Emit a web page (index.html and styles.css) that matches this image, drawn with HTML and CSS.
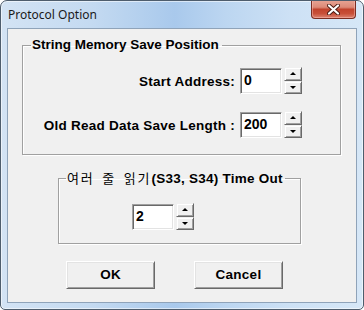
FILE: index.html
```html
<!DOCTYPE html>
<html lang="ko">
<head>
<meta charset="utf-8">
<title>Protocol Option</title>
<link rel="stylesheet" href="styles.css">
</head>
<body>
<div class="window">
  <div class="titlebar">
    <span class="title">Protocol Option</span>
    <span class="close">
      <svg width="13" height="11" viewBox="0 0 13 11">
        <path d="M2 1.5 L11 9.5 M11 1.5 L2 9.5" stroke="#4a1a12" stroke-width="4" stroke-linecap="round"/>
        <path d="M2 1.5 L11 9.5 M11 1.5 L2 9.5" stroke="#ffffff" stroke-width="2.2" stroke-linecap="round"/>
      </svg>
    </span>
  </div>
  <div class="client">
    <fieldset class="group group-memory">
      <legend>String Memory Save Position</legend>
      <div class="row">
        <span class="label">Start Address:</span>
        <div class="edit">0</div>
        <div class="spin"><span class="spin-btn up"></span><span class="spin-btn down"></span></div>
      </div>
      <div class="row row-second">
        <span class="label">Old Read Data Save Length :</span>
        <div class="edit">200</div>
        <div class="spin"><span class="spin-btn up"></span><span class="spin-btn down"></span></div>
      </div>
    </fieldset>
    <fieldset class="group group-timeout">
      <legend><span class="ko">여러 줄 읽기</span><span class="en">(S33, S34) Time Out</span></legend>
      <div class="row row-left">
        <div class="edit">2</div>
        <div class="spin"><span class="spin-btn up"></span><span class="spin-btn down"></span></div>
      </div>
    </fieldset>
    <div class="buttons">
      <div class="btn">OK</div>
      <div class="btn">Cancel</div>
    </div>
  </div>
</div>
</body>
</html>
```

FILE: styles.css
```css
html, body {
  margin: 0;
  padding: 0;
  background: #ffffff;
}

.window {
  width: 364px;
  height: 310px;
  box-sizing: border-box;
  border: 1px solid #4e5d6d;
  border-radius: 7px 7px 5px 5px;
  padding: 0 6px 6px 6px;
  display: flex;
  flex-direction: column;
  background: linear-gradient(to right, #d3e3f4 0%, #c4daf1 25%, #a9c9ec 48%, #bcd6f1 62%, #cde1f5 80%, #d6e7f7 100%);
  box-shadow: inset 0 0 0 1px rgba(255, 255, 255, 0.55);
  overflow: hidden;
}

.titlebar {
  height: 27px;
  flex: none;
  display: flex;
  justify-content: space-between;
  align-items: flex-start;
}

.title {
  font-family: "Noto Sans", "Open Sans", sans-serif;
  font-size: 12px;
  line-height: 16px;
  color: #1a1a1a;
  padding: 6px 0 0 1px;
}

.close {
  width: 45px;
  height: 19px;
  box-sizing: border-box;
  margin: -1px 1px 0 0;
  border: 1px solid #7b2d22;
  border-top: none;
  border-radius: 0 0 4px 4px;
  background: linear-gradient(to bottom, #e8a595 0%, #dd8a78 40%, #c2432d 52%, #c84f38 75%, #dc8371 100%);
  box-shadow: inset 0 0 0 1px rgba(255, 200, 190, 0.45);
  display: flex;
  align-items: center;
  justify-content: center;
}

.client {
  width: 350px;
  height: 275px;
  box-sizing: border-box;
  border: 1px solid #8fa3b9;
  background: #f0f0f0;
  display: flex;
  flex-direction: column;
  align-items: flex-start;
  font-family: "Liberation Sans", Arial, sans-serif;
  font-size: 13.5px;
  font-weight: bold;
  color: #000;
}

.group {
  margin: 0;
  box-sizing: border-box;
  border: 1px solid #a0a0a0;
  box-shadow: inset 1px 1px 0 #ffffff, 1px 1px 0 #ffffff;
  min-width: 0;
}

.group legend {
  line-height: 16px;
  font-size: 13.5px;
  font-weight: bold;
  white-space: nowrap;
}

.group-memory {
  margin: 8px 0 0 14px;
  width: 319px;
  padding: 14px 38px 16px 8px;
}

.group-memory legend {
  padding: 0 3px 0 1px;
}

.group-timeout {
  margin: 15px 0 0 50px;
  width: 243px;
  padding: 16px 8px 13px 7px;
}

.group-timeout legend {
  padding: 0 2px 0 1px;
}

.ko {
  font-family: "Noto Sans CJK KR", sans-serif;
  font-weight: normal;
  font-size: 13px;
  letter-spacing: 1.9px;
  word-spacing: 2px;
}

.en {
  letter-spacing: 0.25px;
}

.row {
  display: flex;
  justify-content: flex-end;
  align-items: center;
}

.row-second {
  margin-top: 17px;
}

.row-left {
  justify-content: flex-start;
  padding-left: 66px;
}

.label {
  margin: 3px 5px 0 0;
  line-height: 16px;
  white-space: nowrap;
  letter-spacing: 0.25px;
}

.edit {
  width: 42px;
  height: 26px;
  box-sizing: border-box;
  border: 1px solid;
  border-color: #a0a0a0 #ffffff #ffffff #a0a0a0;
  box-shadow: inset 1px 1px 0 #696969, inset -1px -1px 0 #e3e3e3;
  background: #ffffff;
  font-size: 14px;
  line-height: 18px;
  padding: 2px 0 0 3px;
}

.spin {
  width: 18px;
  height: 27px;
  margin-left: 2px;
  display: flex;
  flex-direction: column;
}

.spin-btn {
  flex: 1;
  box-sizing: border-box;
  border: 1px solid;
  border-color: #f0f0f0 #696969 #696969 #f0f0f0;
  box-shadow: inset 1px 1px 0 #ffffff, inset -1px -1px 0 #a0a0a0;
  background: #f0f0f0;
  display: flex;
  align-items: center;
  justify-content: center;
}

.spin-btn::before {
  content: "";
  width: 0;
  height: 0;
  border-left: 3px solid transparent;
  border-right: 3px solid transparent;
}

.up::before {
  border-bottom: 3px solid #000;
}

.down::before {
  border-top: 3px solid #000;
}

.buttons {
  margin: 17px 0 0 58px;
  display: flex;
  gap: 39px;
}

.btn {
  width: 89px;
  height: 28px;
  box-sizing: border-box;
  border: 1px solid;
  border-color: #ffffff #696969 #696969 #ffffff;
  box-shadow: inset 1px 1px 0 #e3e3e3, inset -1px -1px 0 #a0a0a0;
  background: #f0f0f0;
  display: flex;
  align-items: center;
  justify-content: center;
  line-height: 16px;
  letter-spacing: 0.25px;
}
```
